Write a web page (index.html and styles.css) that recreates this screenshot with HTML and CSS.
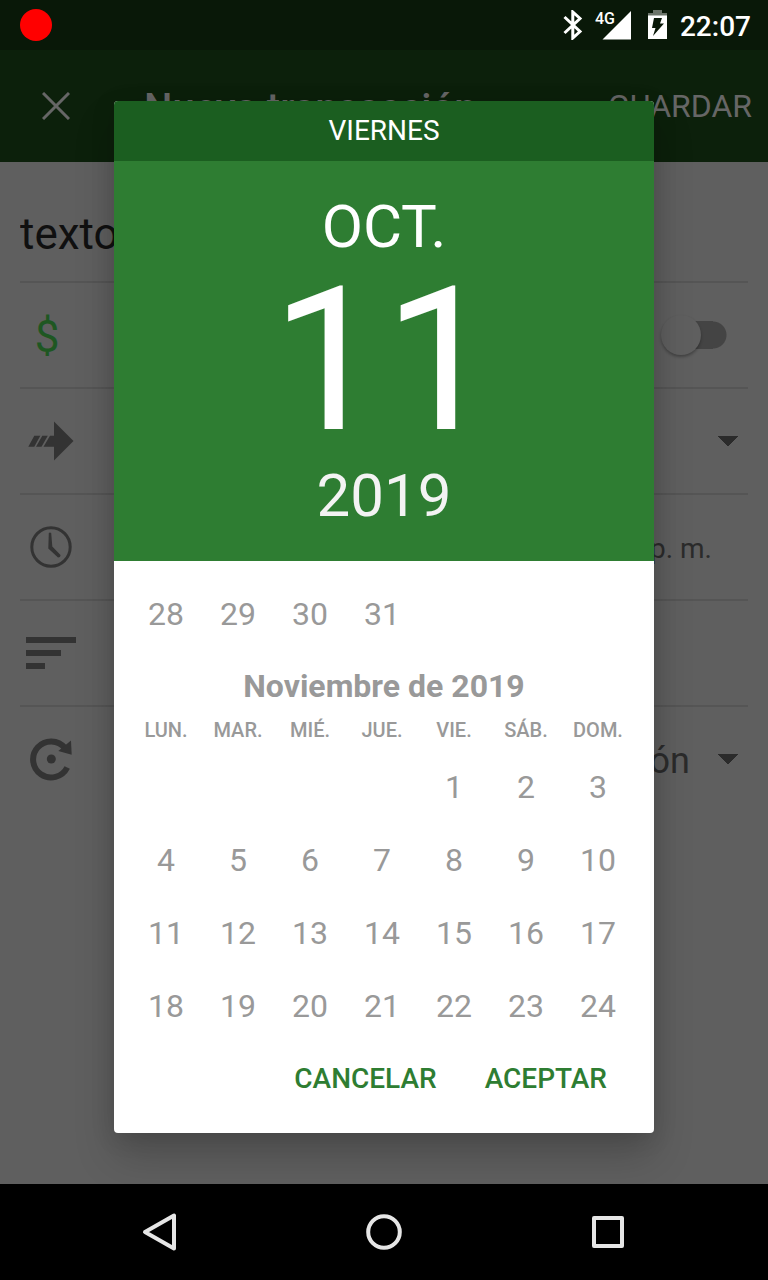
FILE: index.html
```
<!DOCTYPE html>
<html lang="es">
<head>
<meta charset="utf-8">
<meta name="viewport" content="width=device-width, initial-scale=1">
<title>Nueva transacción</title>
<link rel="stylesheet" href="styles.css">
</head>
<body>
<header class="status">
  <span class="record"></span>
  <div class="status-icons">
    <svg class="bluetooth" width="20" height="30" viewBox="0 0 20 30" aria-hidden="true"><path d="M1.500 7 17 21.500 9.800 28V2L17 8.500 1.500 23"/></svg>
    <svg class="signal" width="37" height="30" viewBox="0 0 37 30" aria-hidden="true"><path d="M36 1V29.500H7.500z"/><text x="0" y="14">4G</text></svg>
    <svg class="battery" width="20" height="30" viewBox="0 0 20 30" aria-hidden="true"><path class="battery-top" d="M5 0H14V3H19V6H0V3H5z"/><path class="battery-body" fill-rule="evenodd" d="M0 5.500H19V29H0zM6 8H14L12 13.500H16L5 26 7.500 18H4z"/></svg>
    <time class="clock">22:07</time>
  </div>
</header>

<div class="screen">
  <div class="appbar">
    <button class="close" type="button" aria-label="Cerrar"><svg width="28" height="28" viewBox="0 0 28 28"><path d="M1 1 27 27M27 1 1 27"/></svg></button>
    <h1 class="title">Nueva transacción</h1>
    <button class="save" type="button">GUARDAR</button>
  </div>

  <form class="form">
    <div class="row row-name">
      <input class="name" type="text" value="texto" aria-label="Nombre">
    </div>
    <div class="row">
      <span class="currency">$</span>
      <input class="switch" type="checkbox" role="switch" aria-label="Ingreso">
    </div>
    <div class="row">
      <svg class="icon" viewBox="0 0 62 62" aria-hidden="true"><path d="M34 11.500 53.500 31 34 50.500V36.700H23.500L30 25.700H34zM8.300 36.700 14.300 25.700H20.300L14.300 36.700zM16 36.700 22.300 25.700H27.800L21.500 36.700z"/></svg>
      <select class="select" aria-label="Categoría"><option></option></select>
    </div>
    <div class="row">
      <svg class="icon" viewBox="0 0 62 62" aria-hidden="true"><circle class="ring" cx="31" cy="31" r="19.200"/><path d="M28.800 17Q30 16 31.200 17L32.300 30.500 40.500 39Q40.500 41.500 38 41.500L28.300 32.500z"/></svg>
      <button class="time" type="button">p. m.</button>
    </div>
    <div class="row">
      <svg class="icon" viewBox="0 0 62 62" aria-hidden="true"><path d="M6 15H56V21H6zM6 28H41V34H6zM6 41H25V47H6z"/></svg>
      <input class="note" type="text" aria-label="Descripción">
    </div>
    <div class="row">
      <svg class="icon" viewBox="0 0 62 62" aria-hidden="true"><path class="loop" d="M45 20A18 18 0 1 0 47.200 39.500"/><path d="M51 12.500 51.700 26.700 38.300 23z"/><circle cx="31.300" cy="31" r="4.500"/></svg>
      <select class="select" aria-label="Repetición"><option>ón</option></select>
    </div>
  </form>

  <div class="overlay">
    <section class="dialog" role="dialog" aria-label="Seleccionar fecha">
      <div class="weekday">VIERNES</div>
      <div class="date">
        <div class="month">OCT.</div>
        <div class="day">11</div>
        <button class="year" type="button">2019</button>
      </div>
      <div class="calendar">
        <table class="days">
          <tbody>
            <tr><td><button type="button">28</button></td><td><button type="button">29</button></td><td><button type="button">30</button></td><td><button type="button">31</button></td><td></td><td></td><td></td></tr>
          </tbody>
        </table>
        <table class="days">
          <caption>Noviembre de 2019</caption>
          <thead>
            <tr><th scope="col">LUN.</th><th scope="col">MAR.</th><th scope="col">MIÉ.</th><th scope="col">JUE.</th><th scope="col">VIE.</th><th scope="col">SÁB.</th><th scope="col">DOM.</th></tr>
          </thead>
          <tbody>
            <tr><td></td><td></td><td></td><td></td><td><button type="button">1</button></td><td><button type="button">2</button></td><td><button type="button">3</button></td></tr>
            <tr><td><button type="button">4</button></td><td><button type="button">5</button></td><td><button type="button">6</button></td><td><button type="button">7</button></td><td><button type="button">8</button></td><td><button type="button">9</button></td><td><button type="button">10</button></td></tr>
            <tr><td><button type="button">11</button></td><td><button type="button">12</button></td><td><button type="button">13</button></td><td><button type="button">14</button></td><td><button type="button">15</button></td><td><button type="button">16</button></td><td><button type="button">17</button></td></tr>
            <tr><td><button type="button">18</button></td><td><button type="button">19</button></td><td><button type="button">20</button></td><td><button type="button">21</button></td><td><button type="button">22</button></td><td><button type="button">23</button></td><td><button type="button">24</button></td></tr>
          </tbody>
        </table>
      </div>
      <div class="actions">
        <button type="button">CANCELAR</button>
        <button type="button">ACEPTAR</button>
      </div>
    </section>
  </div>
</div>

<nav class="navbar">
  <button type="button" aria-label="Atrás"><svg width="40" height="40" viewBox="0 0 40 40"><path d="M34 3.500V36.500L5 20z"/></svg></button>
  <button type="button" aria-label="Inicio"><svg width="40" height="40" viewBox="0 0 40 40"><circle cx="20" cy="20" r="15.800"/></svg></button>
  <button type="button" aria-label="Recientes"><svg width="40" height="40" viewBox="0 0 40 40"><path d="M6 6H34V34H6z"/></svg></button>
</nav>
</body>
</html>
```
FILE: styles.css
```
* { box-sizing: border-box; }

body {
  margin: 0;
  min-height: 100vh;
  display: flex;
  flex-direction: column;
  font-family: Roboto, "Liberation Sans", sans-serif;
  background: #5f5f5f;
}

button, input, select {
  font-family: inherit;
  margin: 0;
  padding: 0;
  border: 0;
  border-radius: 0;
  background: none;
  outline: none;
}

/* Status bar */
.status {
  height: 50px;
  padding: 0 17px 0 20px;
  display: flex;
  align-items: center;
  justify-content: space-between;
  background: #091808;
}
.record { width: 32px; height: 32px; border-radius: 50%; background: #f00; }
.status-icons { display: flex; align-items: center; color: #fff; }
.bluetooth { margin-right: 12px; fill: none; stroke: #fff; stroke-width: 3; }
.signal { margin-right: 16px; fill: #fff; }
.signal text { font-size: 16px; font-weight: 500; }
.battery { margin-right: 12px; }
.battery-top { fill: #6b746a; }
.battery-body { fill: #fff; }
.clock { padding-top: 4px; font-size: 28px; line-height: 32px; font-weight: 500; }

/* Screen below the dialog */
.screen {
  position: relative;
  flex: 1;
  overflow: hidden;
}
.appbar {
  height: 112px;
  padding: 0 16px 0 40px;
  display: flex;
  align-items: center;
  background: #0c200b;
  color: #666;
}
.close { width: 32px; height: 32px; display: grid; place-items: center; }
.close svg { fill: none; stroke: #666; stroke-width: 3; }
.title { flex: 1; margin: 0 0 0 72px; padding-top: 5px; font-size: 40px; line-height: 48px; font-weight: 500; white-space: nowrap; }
.save { font-size: 32px; line-height: 48px; color: #666; }

.form { padding: 0 20px; }
.row {
  height: 106px;
  display: flex;
  align-items: center;
  justify-content: space-between;
  border-bottom: 2px solid #555;
}
.row:last-child { border-bottom-color: transparent; }
.row-name { height: 121px; padding-top: 24px; }
.name { width: 100%; font-size: 44px; line-height: 56px; color: #101010; }
.currency { width: 54px; padding-top: 4px; font-size: 44px; line-height: 56px; text-align: center; color: #1e5722; }
.icon { width: 62px; height: 62px; flex: none; fill: #333; }
.ring { fill: none; stroke: #333; stroke-width: 3; }
.loop { fill: none; stroke: #333; stroke-width: 6; }
.select {
  flex: 1;
  height: 62px;
  padding: 4px 58px 0 0;
  appearance: none;
  font-size: 36px;
  line-height: 56px;
  text-align-last: right;
  color: #2b2b2b;
  background-image: linear-gradient(to top right, transparent 50%, #2b2b2b 50%), linear-gradient(to top left, transparent 50%, #2b2b2b 50%);
  background-size: 10px 11px;
  background-position: right 20px center, right 10px center;
  background-repeat: no-repeat;
}
.time { flex: 1; padding: 4px 36px 0 0; font-size: 28px; line-height: 56px; text-align: right; color: #2b2b2b; }
.note { flex: 1; height: 56px; font-size: 36px; }
.switch {
  width: 66px;
  height: 40px;
  margin-right: 21px;
  appearance: none;
  display: flex;
  align-items: center;
  background: linear-gradient(#444, #444) left 20px center / 32px 28px no-repeat,
    radial-gradient(circle at 14px 14px, #444 13px, transparent 14px) right center / 28px 28px no-repeat;
}
.switch::before {
  content: "";
  width: 40px;
  height: 40px;
  border-radius: 50%;
  background: #5f5f5f;
  box-shadow: 0 2px 3px rgba(0, 0, 0, 0.3);
}

/* Date picker dialog */
.overlay {
  position: absolute;
  inset: 0;
  display: grid;
  place-items: center;
}
.dialog {
  width: 540px;
  max-width: 100%;
  border-radius: 4px;
  overflow: hidden;
  background: #fff;
  box-shadow: 0 24px 40px rgba(0, 0, 0, 0.18), 0 4px 24px rgba(0, 0, 0, 0.12);
}
.weekday {
  background: #1b5e20;
  color: #fff;
  font-size: 28px;
  line-height: 60px;
  text-align: center;
}
.date {
  padding: 30px 0 28px;
  display: flex;
  flex-direction: column;
  align-items: center;
  background: #2e7d32;
  color: #fff;
}
.month { font-size: 60px; line-height: 72px; }
.day { font-size: 200px; line-height: 196px; }
.year { font-size: 60px; line-height: 74px; color: #f3f3f3; }

.calendar { padding: 16px 20px 0 16px; }
.days {
  width: 100%;
  table-layout: fixed;
  border-collapse: collapse;
  color: #999;
}
.days caption { padding-top: 16px; font-size: 32px; line-height: 40px; font-weight: 700; text-indent: 4px; }
.days th { padding: 12px 0 8px; font-size: 20px; line-height: 24px; font-weight: 500; }
.days td { height: 73px; padding: 0; }
.days button { display: block; width: 100%; font-size: 32px; line-height: 72px; text-align: center; color: #999; }

.actions {
  padding: 13px 47px 30px;
  display: flex;
  justify-content: flex-end;
  gap: 48px;
}
.actions button { font-size: 28px; line-height: 48px; font-weight: 500; color: #2e7d32; }

/* System navigation */
.navbar {
  height: 96px;
  padding: 0 48px;
  display: grid;
  grid-template-columns: repeat(3, 1fr);
  background: #000;
}
.navbar button { display: grid; place-items: center; }
.navbar svg { fill: none; stroke: #e6e6e6; stroke-width: 4; stroke-linejoin: round; }
```
